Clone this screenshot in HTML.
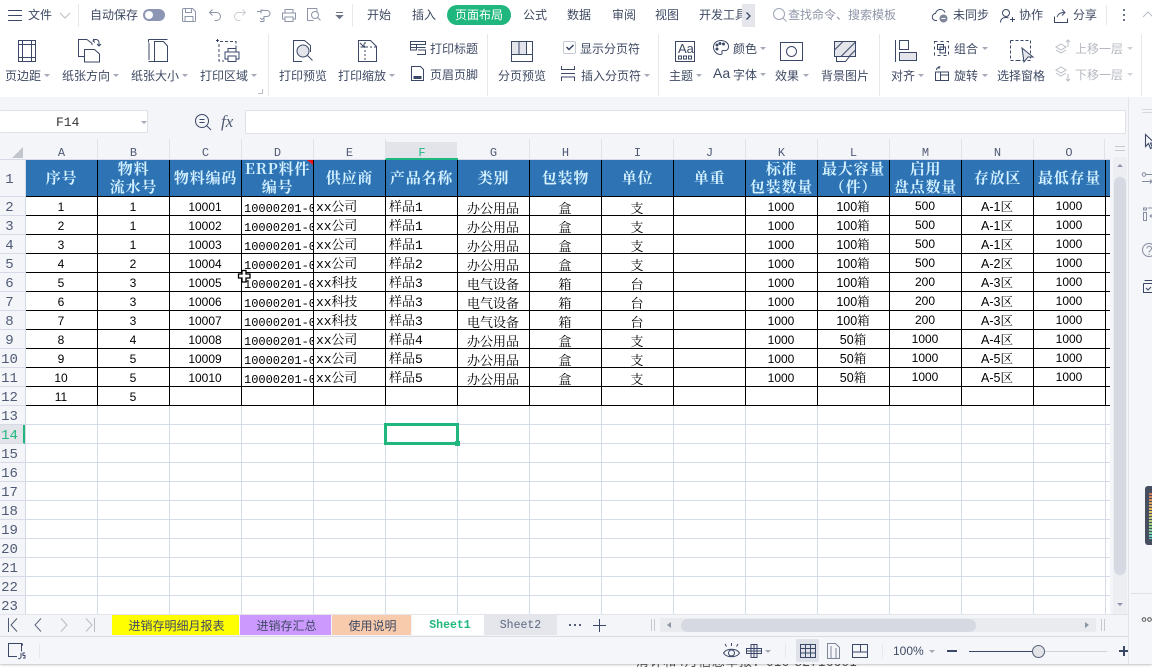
<!DOCTYPE html>
<html lang="zh"><head><meta charset="utf-8"><title>WPS</title>
<style>
html,body{margin:0;padding:0;width:1152px;height:668px;overflow:hidden;background:#fff}
body{position:relative;font-family:"Liberation Sans","Noto Sans CJK SC",sans-serif;font-size:12px;color:#3f4a63}
.a{position:absolute}
.t{position:absolute;white-space:nowrap;line-height:16px;font-size:12px;color:#3f4a63}
.c{position:absolute;width:0;height:0;border-left:3px solid transparent;border-right:3px solid transparent;border-top:3px solid #a3a9b6}
.d{position:absolute;width:1px;background:#e6e8ec}
svg{position:absolute;overflow:visible;fill:none;stroke:#3a4766;stroke-width:1}
.g svg,svg.g{stroke:#b9bdc6}
.m{color:#b4b8c0}
.ch{position:absolute;top:139px;height:20px;width:72px;text-align:center;font:12px/28px "Liberation Mono",monospace;color:#4f5a75;border-right:1px solid #dfe2e8;box-sizing:border-box}
.rn{position:absolute;left:0;width:25px;height:19px;padding-right:6px;text-align:center;font:14px/22px "Liberation Mono",monospace;color:#4f5a75;border-bottom:1px solid #d5dae6;box-sizing:border-box}
.h{position:absolute;top:160px;width:71px;height:36px;display:flex;align-items:center;justify-content:center;text-align:center;font:bold 15px/18px "Noto Serif CJK SC","Liberation Serif",serif;color:#d3f1ff;letter-spacing:.8px;z-index:3}
#grid{position:absolute;left:25px;top:198px;display:grid;grid-template-columns:repeat(15,72px);grid-auto-rows:19px;width:1080px;z-index:3;color:#000;font:12px/19px "Liberation Sans","Noto Serif CJK SC",serif}
#grid div{overflow:hidden;text-align:center;white-space:nowrap;box-sizing:border-box;height:18px}
#grid div:nth-child(15n+4){text-align:left;padding:2px 0 0 3px;font:12px/19px "Liberation Mono",monospace;height:19px;width:72px}
#grid div:nth-child(15n+5){text-align:left;padding:1px 0 0 3px;font:13px/18px "Liberation Mono","Noto Serif CJK SC",serif;letter-spacing:-.1px;height:19px}
#grid div:nth-child(15n+6){text-align:left;padding:1px 0 0 4px;font:13px/18px "Liberation Mono","Noto Serif CJK SC",serif;height:19px}
#grid div:nth-child(15n+7),#grid div:nth-child(15n+8),#grid div:nth-child(15n+9){font:13px/19px "Noto Serif CJK SC",serif;height:19px}
#grid div:nth-child(15n+12),#grid div:nth-child(15n+14){font-size:12.5px;font-family:"Liberation Sans","Noto Serif CJK SC",serif}
#grid div:nth-child(15n+13),#grid div:nth-child(15n+15){margin-top:-1px}
.tab{position:absolute;top:615px;height:20px;text-align:center;line-height:22px;font-size:12px}
</style></head><body>

<!-- top bar -->
<svg style="left:8px;top:10px" width="14" height="11"><path d="M0 .5h14M0 5.5h14M0 10.5h14"/></svg>
<div class="t" style="left:28px;top:7px">文件</div>
<svg class="g" style="left:60px;top:13px" width="10" height="6"><path d="M0 0l5 5 5-5"/></svg>
<div class="d" style="left:78px;top:4px;height:23px"></div>
<div class="t" style="left:90px;top:7px">自动保存</div>
<div class="a" style="left:143px;top:9px;width:22px;height:12px;border-radius:6px;background:#8c96b4"></div>
<div class="a" style="left:145px;top:11px;width:8px;height:8px;border-radius:4px;background:#fff"></div>
<svg style="left:182px;top:8px;stroke:#8d95a8" width="14" height="14"><path d="M.5 1.5a1 1 0 0 1 1-1h9l3 3v9a1 1 0 0 1-1 1h-11a1 1 0 0 1-1-1zM3.500 .5v4h6v-4M3 13.500v-5h8v5"/></svg>
<svg style="left:209px;top:9px;stroke:#8d95a8" width="13" height="12"><path d="M3.500 .5L.5 3.500l3 3M.5 3.500h7a4 4 0 0 1 0 8h-2"/></svg>
<svg class="g" style="left:233px;top:9px;stroke:#c9ccd3" width="13" height="12"><path d="M9.500 .5l3 3-3 3M12.500 3.500h-7a4 4 0 0 0 0 8h2"/></svg>
<svg style="left:257px;top:9px;stroke:#8d95a8" width="14" height="13"><path d="M0 2.500h4l2-2M4 .5v4M6 1.500h4a3 3 0 0 1 0 6H7v5M3 9l2 1.500L7 9M3 12.500h4"/></svg>
<svg style="left:282px;top:9px;stroke:#8d95a8" width="14" height="13"><path d="M3 4V.5h8V4M3 10H.5V4h13v6H11M3 8h8v4.500H3z"/></svg>
<svg style="left:307px;top:8px;stroke:#8d95a8" width="15" height="14"><path d="M10 .5H.5v12h6M10 .5V4"/><circle cx="8" cy="7" r="3.500"/><path d="M10.500 9.500l3 3"/></svg>
<svg style="left:335px;top:12px;stroke:#6d7588" width="9" height="8"><path d="M1 .5h7"/><path d="M1.500 3.500l3 3 3-3z" fill="#6d7588"/></svg>
<div class="d" style="left:352px;top:4px;height:23px"></div>
<div class="t" style="left:367px;top:7px">开始</div>
<div class="t" style="left:412px;top:7px">插入</div>
<div class="a" style="left:447px;top:5px;width:64px;height:20px;border-radius:10px;background:#1fb77d"></div>
<div class="t" style="left:455px;top:7px;color:#fff">页面布局</div>
<div class="t" style="left:523px;top:7px">公式</div>
<div class="t" style="left:567px;top:7px">数据</div>
<div class="t" style="left:612px;top:7px">审阅</div>
<div class="t" style="left:655px;top:7px">视图</div>
<div class="t" style="left:699px;top:7px;width:43px;overflow:hidden">开发工具</div>
<div class="a" style="left:742px;top:4px;width:13px;height:23px;background:#e4e6eb"></div>
<svg style="left:746px;top:12px;stroke-width:1.300" width="5" height="8"><path d="M.5 .5L4 4 .5 7.500"/></svg>
<svg style="left:773px;top:8px;stroke:#9ca3b3" width="14" height="14"><circle cx="6" cy="6" r="5.500"/><path d="M10 10l3.500 3.500"/></svg>
<div class="t" style="left:788px;top:7px;color:#8f96a8">查找命令、搜索模板</div>
<svg style="left:932px;top:8px" width="18" height="15"><path d="M5 12.500H4a3.500 3.500 0 0 1-.5-7A5 5 0 0 1 13 4.500"/><circle cx="11.500" cy="10.500" r="4" fill="#7d8598" stroke="none"/><path d="M9.500 10.500h4" stroke="#fff"/></svg>
<div class="t" style="left:953px;top:7px">未同步</div>
<svg style="left:1000px;top:9px" width="15" height="14"><circle cx="6" cy="4" r="3.500"/><path d="M.5 13.500c0-3 2-5 5.500-5 1 0 2 .2 2.500.5M10 10.500h5M12.500 8v5"/></svg>
<div class="t" style="left:1019px;top:7px">协作</div>
<svg style="left:1054px;top:9px" width="15" height="14"><path d="M.5 7.500v6h13v-4M3 8c1-3 3-4.500 7-4.500M8 .5l3 3-3 3"/></svg>
<div class="t" style="left:1073px;top:7px">分享</div>
<div class="d" style="left:1106px;top:5px;height:20px"></div>
<div class="a" style="left:1123px;top:9px;width:2px;height:2px;background:#6d7588;box-shadow:0 5px #6d7588,0 10px #6d7588"></div>
<svg class="g" style="left:1143px;top:12px" width="9" height="6"><path d="M0 5l5-5 5 5"/></svg>

<!-- ribbon -->
<svg style="left:18px;top:40px" width="18" height="22"><path d="M.5 .5h17v21H.5zM.5 4.500h17M.5 17.500h17M4.500 .5v21M13.500 .5v21"/></svg>
<div class="t" style="left:5px;top:68px">页边距</div><div class="c" style="left:44px;top:74px"></div>
<svg style="left:78px;top:39px" width="24" height="24"><path d="M9 .5H.5v17h6M9 .5l5 4v1.500M6.500 10.500h10l5 4.500v8h-15zM15 .5h3a3 3 0 0 1 3 3v3M19 5l2 2 2-2M17 .5l-2 1.500 2 1.500"/></svg>
<div class="t" style="left:62px;top:68px">纸张方向</div><div class="c" style="left:113px;top:74px"></div>
<svg style="left:148px;top:39px" width="20" height="23"><path d="M.5 .5h19M.5 22.500h6M1 4v17M6.500 2.500V22.500h13V7l-4-4.500z" /><path d="M.5 .5v3"/></svg>
<div class="t" style="left:131px;top:68px">纸张大小</div><div class="c" style="left:182px;top:74px"></div>
<svg style="left:216px;top:39px" width="24" height="24"><path d="M0 1.500h3M1.500 0v3M4 2.500h16v7M3 5v17h5" stroke-dasharray="3 2"/><path d="M12 13v-3.500h8V13M12 20H9v-7h14v7h-3M12 17h8v5.500h-8z"/></svg>
<div class="t" style="left:200px;top:68px">打印区域</div><div class="c" style="left:251px;top:74px"></div>
<svg class="g" style="left:258px;top:89px" width="5" height="5"><path d="M0 4.500h4.500V0"/></svg>
<div class="d" style="left:268px;top:34px;height:62px"></div>

<svg style="left:293px;top:40px" width="20" height="22"><path d="M9 21.500H.5V.5h11l6 5V12"/><circle cx="10" cy="11" r="6" fill="#e3e5ea"/><path d="M14.500 15.500l5 5"/></svg>
<div class="t" style="left:279px;top:68px">打印预览</div>
<svg style="left:358px;top:40px" width="19" height="22"><path d="M.5 .5h12l6 6v15H.5z"/><path d="M7 2v19M8 7h10" stroke-dasharray="2 2"/><path d="M2 3l4 4M6 3.500V7H2.500"/></svg>
<div class="t" style="left:338px;top:68px">打印缩放</div><div class="c" style="left:389px;top:74px"></div>
<svg style="left:410px;top:41px" width="16" height="14"><path d="M.5 .5h15v3H.5zM.5 3.500V9h6V3.500M.5 6.500h6M6.500 6.500h9M7 13.500h8.500V9H8" /></svg>
<div class="t" style="left:430px;top:41px">打印标题</div>
<svg style="left:411px;top:66px" width="13" height="15"><path d="M.5 .5h9l3 3v11H.5zM3 11.500h7"/><path d="M3 10.500h7v2H3z" fill="#3a4766"/></svg>
<div class="t" style="left:430px;top:67px">页眉页脚</div>
<div class="d" style="left:487px;top:34px;height:62px"></div>

<svg style="left:511px;top:41px" width="22" height="21"><path d="M.5 .5h21v20H.5z"/><path d="M.5 .5h15v13H.5z" fill="#e3e5ea"/><path d="M.5 13.500h21M8 .5v13M15.500 .5v13"/></svg>
<div class="t" style="left:498px;top:68px">分页预览</div>
<div class="a" style="left:563px;top:41px;width:11px;height:11px;border:1px solid #c5c9d2;border-radius:2px"></div>
<svg style="left:566px;top:44px;stroke-width:1.500" width="8" height="7"><path d="M.5 3l2.500 2.500L7.500 1"/></svg>
<div class="t" style="left:580px;top:41px">显示分页符</div>
<svg style="left:561px;top:66px" width="14" height="15"><path d="M.5 0v3.500h13V0M.5 15v-4h13v4M0 7.500h14" /></svg>
<div class="t" style="left:581px;top:68px">插入分页符</div><div class="c" style="left:644px;top:74px"></div>
<div class="d" style="left:658px;top:34px;height:62px"></div>

<svg style="left:675px;top:41px" width="20" height="21"><path d="M.5 .5h19v20H.5zM3.500 15h3v3h-3zM8.500 15h3v3h-3zM13.500 15h3v3h-3z"/></svg>
<div class="t" style="left:678px;top:41px;font-size:13px;line-height:16px">Aa</div>
<div class="t" style="left:669px;top:68px">主题</div><div class="c" style="left:696px;top:74px"></div>
<svg style="left:713px;top:40px" width="16" height="15"><path d="M8 .5c4 0 7.500 2.500 7.500 6S13 11 11 10.500c-2-.5-2.500 1-2 2s0 2-1.500 2C3.500 14.500.5 11 .5 7S4 .5 8 .5z"/><circle cx="4" cy="5" r="1" fill="#3a4766"/><circle cx="7" cy="3.500" r="1" fill="#3a4766"/><circle cx="10.500" cy="4" r="1" fill="#3a4766"/><circle cx="4" cy="9" r="1" fill="#3a4766"/></svg>
<div class="t" style="left:733px;top:41px">颜色</div><div class="c" style="left:760px;top:47px"></div>
<div class="t" style="left:713px;top:65px;font-size:14px">Aa</div>
<div class="t" style="left:733px;top:67px">字体</div><div class="c" style="left:760px;top:73px"></div>
<svg style="left:780px;top:42px" width="23" height="19"><path d="M.5 .5h22v18H.5z"/><circle cx="11.500" cy="9.500" r="5"/></svg>
<div class="t" style="left:775px;top:68px">效果</div><div class="c" style="left:803px;top:74px"></div>
<svg style="left:834px;top:41px" width="22" height="22"><path d="M.5 .5h21v15h-21z" fill="#e3e5ea"/><path d="M.5 9L9 .5M7 15.500L22 .5M15 15.500L21.500 9M.5 15.500h2v5h9l4-5"/></svg>
<div class="t" style="left:821px;top:68px">背景图片</div>
<div class="d" style="left:879px;top:34px;height:62px"></div>

<svg style="left:895px;top:40px" width="22" height="22"><path d="M.5 0v22M4.500 .5h9v9h-9z"/><path d="M4.500 12.500h17v8h-17z" fill="#e3e5ea"/></svg>
<div class="t" style="left:891px;top:68px">对齐</div><div class="c" style="left:918px;top:74px"></div>
<svg style="left:934px;top:41px" width="15" height="15"><path d="M.5 .5h14v14H.5z" stroke-dasharray="3 3"/><path d="M3.500 3.500h6v5h-6zM6 6h5.500v6H6z"/></svg>
<div class="t" style="left:954px;top:41px">组合</div><div class="c" style="left:982px;top:47px"></div>
<svg style="left:935px;top:66px" width="14" height="15"><path d="M.5 14.500V6h5v8.500zM5.500 14.500V9h8v5.500h-13M5.500 6h8V14M1.500 4c0-2 1.500-3 4-3M4 0v3"/></svg>
<div class="t" style="left:954px;top:68px">旋转</div><div class="c" style="left:982px;top:74px"></div>
<svg style="left:1010px;top:40px" width="24" height="23"><path d="M.5 .5h20v20H8" stroke-dasharray="3 2"/><path d="M.5 .5v20H8" stroke-dasharray="3 2"/><path d="M12 8l11 9h-5l-4 5z" fill="#e3e5ea"/></svg>
<div class="t" style="left:997px;top:68px">选择窗格</div>
<svg class="g" style="left:1055px;top:40px" width="16" height="16"><path d="M6 4l-5 3 5 3 5-3zM1 10l5 3 5-3M13 0v7M11 2l2-2 2 2"/></svg>
<div class="t m" style="left:1075px;top:41px">上移一层</div><div class="c" style="left:1127px;top:47px;border-top-color:#cfd2d8"></div>
<svg class="g" style="left:1055px;top:66px" width="16" height="16"><path d="M6 1L1 4l5 3 5-3zM1 7l5 3 5-3M13 8v7M11 13l2 2 2-2"/></svg>
<div class="t m" style="left:1075px;top:67px">下移一层</div><div class="c" style="left:1127px;top:73px;border-top-color:#cfd2d8"></div>
<div class="d" style="left:1141px;top:34px;height:62px"></div>

<!-- formula bar area -->
<div class="a" style="left:0;top:97px;width:1152px;height:42px;background:#f4f5f8"></div>
<div class="a" style="left:0;top:110px;width:148px;height:23px;background:#fff;border:1px solid #dfe1e7;border-left:0;border-radius:2px;box-sizing:border-box"></div>
<div class="t" style="left:56px;top:115px;font:13px/16px 'Liberation Mono',monospace;color:#333">F14</div>
<div class="c" style="left:141px;top:121px"></div>
<svg style="left:195px;top:114px" width="17" height="16"><circle cx="7" cy="7" r="6.500"/><path d="M12 12l4 4M4.500 5.500h5M4.500 8.500h5"/></svg>
<div class="t" style="left:221px;top:113px;font:italic 17px/18px 'Liberation Serif',serif;color:#4f5a75">fx</div>
<div class="a" style="left:245px;top:110px;width:881px;height:24px;background:#fff;border:1px solid #dfe1e7;border-radius:2px;box-sizing:border-box"></div>

<!-- column headers -->
<div class="a" style="left:0;top:139px;width:1128px;height:21px;background:#f4f5f8;border-bottom:1px solid #d5dae6;box-sizing:border-box"></div>
<svg style="left:12px;top:147px;stroke:none;fill:#c2c5cc" width="11" height="11"><path d="M11 0v11H0z"/></svg>
<div class="a" style="left:385px;top:142px;width:72px;height:17px;background:#e2e4ea"></div>
<div class="a" style="left:385px;top:158px;width:73px;height:2px;background:#1fb77d"></div>
<div class="ch" style="left:26px">A</div><div class="ch" style="left:98px">B</div><div class="ch" style="left:170px">C</div><div class="ch" style="left:242px">D</div><div class="ch" style="left:314px">E</div><div class="ch" style="left:386px;color:#1fb77d;border:0">F</div><div class="ch" style="left:458px">G</div><div class="ch" style="left:530px">H</div><div class="ch" style="left:602px">I</div><div class="ch" style="left:674px">J</div><div class="ch" style="left:746px">K</div><div class="ch" style="left:818px">L</div><div class="ch" style="left:890px">M</div><div class="ch" style="left:962px">N</div><div class="ch" style="left:1034px;width:71px">O</div>

<!-- row headers -->
<div class="a" style="left:0;top:160px;width:25px;height:454px;background:#f4f5f8;border-right:1px solid #d5dae6;box-sizing:content-box"></div>
<div class="rn" style="top:160px;height:37px;line-height:41px">1</div>
<div class="rn" style="top:197px">2</div><div class="rn" style="top:216px">3</div><div class="rn" style="top:235px">4</div><div class="rn" style="top:254px">5</div><div class="rn" style="top:273px">6</div><div class="rn" style="top:292px">7</div><div class="rn" style="top:311px">8</div><div class="rn" style="top:330px">9</div><div class="rn" style="top:349px">10</div><div class="rn" style="top:368px">11</div><div class="rn" style="top:387px">12</div><div class="rn" style="top:406px">13</div>
<div class="rn" style="top:425px;color:#1fb77d;background:#e2e4ea;border-right:2px solid #1fb77d;padding-right:4px">14</div>
<div class="rn" style="top:444px">15</div><div class="rn" style="top:463px">16</div><div class="rn" style="top:482px">17</div><div class="rn" style="top:501px">18</div><div class="rn" style="top:520px">19</div><div class="rn" style="top:539px">20</div><div class="rn" style="top:558px">21</div><div class="rn" style="top:577px">22</div><div class="rn" style="top:596px">23</div>

<!-- sheet -->
<div class="a" style="left:26px;top:160px;width:1084px;height:36px;background:#2e74b5"></div>
<div class="a" style="left:26px;top:405px;width:1084px;height:209px;background-image:linear-gradient(to right,transparent 71px,#d5dce9 71px),linear-gradient(to bottom,transparent 18px,#d5dce9 18px);background-size:72px 19px;background-position:0 1px"></div>
<div class="a" style="left:26px;top:160px;width:1084px;height:246px;background-image:linear-gradient(to right,transparent 71px,#000 71px);background-size:72px 100%;z-index:2"></div>
<div class="a" style="left:26px;top:196px;width:1084px;height:210px;background-image:linear-gradient(to bottom,#000 1px,transparent 1px);background-size:100% 19px;z-index:2"></div>
<svg style="left:307px;top:160px;stroke:none;fill:#e8141c;z-index:4" width="6" height="5"><path d="M0 0h6v5z"/></svg>

<div class="h" style="left:26px">序号</div>
<div class="h" style="left:98px">物料<br>流水号</div>
<div class="h" style="left:170px">物料编码</div>
<div class="h" style="left:242px">ERP料件<br>编号</div>
<div class="h" style="left:314px">供应商</div>
<div class="h" style="left:386px">产品名称</div>
<div class="h" style="left:458px">类别</div>
<div class="h" style="left:530px">包装物</div>
<div class="h" style="left:602px">单位</div>
<div class="h" style="left:674px">单重</div>
<div class="h" style="left:746px">标准<br>包装数量</div>
<div class="h" style="left:818px">最大容量<br>（件）</div>
<div class="h" style="left:890px">启用<br>盘点数量</div>
<div class="h" style="left:962px">存放区</div>
<div class="h" style="left:1034px">最低存量</div>

<div id="grid">
<div>1</div><div>1</div><div>10001</div><div>10000201-01</div><div>xx公司</div><div>样品1</div><div>办公用品</div><div>盒</div><div>支</div><div></div><div>1000</div><div>100箱</div><div>500</div><div>A-1区</div><div>1000</div>
<div>2</div><div>1</div><div>10002</div><div>10000201-02</div><div>xx公司</div><div>样品1</div><div>办公用品</div><div>盒</div><div>支</div><div></div><div>1000</div><div>100箱</div><div>500</div><div>A-1区</div><div>1000</div>
<div>3</div><div>1</div><div>10003</div><div>10000201-03</div><div>xx公司</div><div>样品1</div><div>办公用品</div><div>盒</div><div>支</div><div></div><div>1000</div><div>100箱</div><div>500</div><div>A-1区</div><div>1000</div>
<div>4</div><div>2</div><div>10004</div><div>10000201-04</div><div>xx公司</div><div>样品2</div><div>办公用品</div><div>盒</div><div>支</div><div></div><div>1000</div><div>100箱</div><div>500</div><div>A-2区</div><div>1000</div>
<div>5</div><div>3</div><div>10005</div><div>10000201-05</div><div>xx科技</div><div>样品3</div><div>电气设备</div><div>箱</div><div>台</div><div></div><div>1000</div><div>100箱</div><div>200</div><div>A-3区</div><div>1000</div>
<div>6</div><div>3</div><div>10006</div><div>10000201-06</div><div>xx科技</div><div>样品3</div><div>电气设备</div><div>箱</div><div>台</div><div></div><div>1000</div><div>100箱</div><div>200</div><div>A-3区</div><div>1000</div>
<div>7</div><div>3</div><div>10007</div><div>10000201-07</div><div>xx科技</div><div>样品3</div><div>电气设备</div><div>箱</div><div>台</div><div></div><div>1000</div><div>100箱</div><div>200</div><div>A-3区</div><div>1000</div>
<div>8</div><div>4</div><div>10008</div><div>10000201-08</div><div>xx公司</div><div>样品4</div><div>办公用品</div><div>盒</div><div>支</div><div></div><div>1000</div><div>50箱</div><div>1000</div><div>A-4区</div><div>1000</div>
<div>9</div><div>5</div><div>10009</div><div>10000201-09</div><div>xx公司</div><div>样品5</div><div>办公用品</div><div>盒</div><div>支</div><div></div><div>1000</div><div>50箱</div><div>1000</div><div>A-5区</div><div>1000</div>
<div>10</div><div>5</div><div>10010</div><div>10000201-01</div><div>xx公司</div><div>样品5</div><div>办公用品</div><div>盒</div><div>支</div><div></div><div>1000</div><div>50箱</div><div>1000</div><div>A-5区</div><div>1000</div>
<div>11</div><div>5</div><div></div><div></div><div></div><div></div><div></div><div></div><div></div><div></div><div></div><div></div><div></div><div></div><div></div>
</div>

<!-- selected cell -->
<div class="a" style="left:384px;top:423px;width:75px;height:22px;border:3px solid #1fb77d;box-sizing:border-box;z-index:4"></div>
<div class="a" style="left:455px;top:441px;width:5px;height:5px;background:#1fb77d;z-index:5"></div>
<!-- cursor -->
<svg style="left:238px;top:270px;z-index:6;stroke:#000;stroke-width:1.300;fill:#fff" width="13" height="13"><path d="M4 .5h4v3.500h4v4H8v4H4V8H.5V4H4z"/></svg>

<!-- vertical scrollbar -->
<div class="a" style="left:1110px;top:139px;width:18px;height:475px;background:#f4f5f8;z-index:5"></div>
<div class="a" style="left:1113px;top:157px;width:14px;height:457px;background:#edeef2;z-index:5"></div>
<div class="a" style="left:1114px;top:177px;width:12px;height:398px;border-radius:6px;background:#d6d9e2;z-index:6"></div>
<svg style="left:1115px;top:146px;stroke:#c5c9d2;z-index:6" width="10" height="5"><path d="M0 .5h10M0 4.500h10"/></svg>
<div class="c" style="left:1117px;top:164px;border-top:0;border-bottom:3px solid #8e95a8;z-index:6"></div>
<div class="c" style="left:1117px;top:603px;border-top-color:#8e95a8;z-index:6"></div>

<!-- right panel -->
<div class="a" style="left:1128px;top:97px;width:24px;height:567px;background:#f5f6f9;border-left:1px solid #e2e4e9;box-sizing:border-box;z-index:5"></div>
<svg style="left:1142px;top:109px;stroke:#d5d8df;z-index:6" width="10" height="4"><path d="M0 .5h10M0 3.500h10"/></svg>
<svg style="left:1145px;top:134px;z-index:6;stroke-width:1.100" width="9" height="15"><path d="M.5 .5v12l3-3 2 5 2-1-2-4.500h4z"/></svg>
<svg style="left:1142px;top:172px;z-index:6;stroke:#858da0" width="12" height="12"><circle cx="2" cy="2.500" r="1.800"/><path d="M4 2.500h8M0 9.500h10M8 7.500l2 2-2 2"/></svg>
<svg style="left:1143px;top:207px;z-index:6;stroke:#858da0" width="10" height="14"><path d="M.5 1h3v2h-3zM.5 5.500h3v8h-3zM5 1h6M7 9h5M8.500 7.500L7 9l1.500 1.500"/></svg>
<svg style="left:1142px;top:243px;z-index:6;stroke:#858da0" width="12" height="15"><circle cx="7" cy="7" r="6.500"/><path d="M5 5.500c0-3 4.500-3 4.500 0 0 2-2.500 2-2.500 4M7 11v1"/></svg>
<svg style="left:1143px;top:280px;z-index:6" width="10" height="13"><path d="M1.500 .5h9M.5 3.500h10M.5 3.500v9h10M3 8l2 2 3-3"/></svg>
<div class="a" style="left:1145px;top:486px;width:7px;height:59px;background:#464e60;border-radius:3px 0 0 3px;z-index:6"></div>
<div class="a" style="left:1149px;top:493px;width:3px;height:46px;background:linear-gradient(#c9795a,#e0c26b 40%,#9fd18a 70%,#63d0c0);z-index:7"></div>
<div class="a" style="left:1149px;top:493px;width:3px;height:46px;background:repeating-linear-gradient(to bottom,transparent 0 2px,#464e60 2px 3px);z-index:8"></div>
<div class="a" style="left:1131px;top:593px;width:21px;height:1px;background:#dfe1e7;z-index:6"></div>
<svg style="left:1142px;top:617px;stroke:#555;z-index:6" width="10" height="5"><circle cx="2" cy="2.500" r="1.800"/><circle cx="7.500" cy="2.500" r="1.800"/></svg>

<!-- tab bar -->
<div class="a" style="left:0;top:614px;width:1128px;height:23px;background:#f4f5f8;border-top:1px solid #e3e5ea;box-sizing:border-box"></div>
<div class="a" style="left:0;top:636px;width:1152px;height:1px;background:#e0e2e7"></div>
<svg style="left:8px;top:618px;stroke:#4f5a75" width="10" height="14"><path d="M.5 0v14M9 .5L3 7l6 6.500"/></svg>
<svg style="left:34px;top:618px;stroke:#5d6780" width="8" height="14"><path d="M7 .5L1 7l6 6.500"/></svg>
<svg style="left:60px;top:618px;stroke:#b7bbc5" width="8" height="14"><path d="M1 .5L7 7l-6 6.500"/></svg>
<svg style="left:85px;top:618px;stroke:#b7bbc5" width="10" height="14"><path d="M9.500 0v14M1 .5L7 7l-6 6.500"/></svg>
<div class="tab" style="left:112px;width:127px;background:#ff0;padding-left:2px;box-sizing:border-box">进销存明细月报表</div>
<div class="tab" style="left:240px;width:91px;background:#cc99ff;padding-left:2px;box-sizing:border-box">进销存汇总</div>
<div class="tab" style="left:332px;width:79px;background:#f8cbad;padding-left:2px;box-sizing:border-box">使用说明</div>
<div class="tab" style="left:412px;width:72px;background:#fff;color:#1fb77d;font:bold 11.500px/22px 'Liberation Mono',monospace;padding-left:4px;box-sizing:border-box">Sheet1</div>
<div class="tab" style="left:484px;width:73px;background:#e4e6eb;font:11.500px/22px 'Liberation Mono',monospace;color:#5d6780">Sheet2</div>
<div class="a" style="left:569px;top:624px;width:2px;height:2px;background:#555f78;box-shadow:5px 0 #555f78,10px 0 #555f78"></div>
<svg style="left:593px;top:619px;stroke:#3a4766" width="13" height="13"><path d="M0 6.500h13M6.500 0v13"/></svg>
<svg style="left:651px;top:619px;stroke:#c4c8d1" width="4" height="12"><path d="M.5 0v12M3.500 0v12"/></svg>
<div class="a" style="left:660px;top:618px;width:436px;height:14px;background:#e9ebef"></div>
<div class="a" style="left:681px;top:619px;width:295px;height:13px;border-radius:7px;background:#d6d9e2"></div>
<svg style="left:667px;top:622px;stroke:none;fill:#8e95a8" width="4" height="6"><path d="M4 0v6L0 3z"/></svg>
<svg style="left:1085px;top:622px;stroke:none;fill:#8e95a8" width="4" height="6"><path d="M0 0v6l4-3z"/></svg>
<svg style="left:1101px;top:619px;stroke:#c4c8d1" width="4" height="12"><path d="M.5 0v12M3.500 0v12"/></svg>

<!-- status bar -->
<div class="a" style="left:0;top:637px;width:1152px;height:27px;background:#f5f6f9;box-shadow:0 1px 2px rgba(0,0,0,.25);z-index:2"></div>
<div class="a" style="left:0;top:664px;width:1152px;height:4px;background:#fff;overflow:hidden"><div class="t" style="left:636px;top:-10px;font-size:13px;letter-spacing:.6px;color:#555">清计和4月信息举报：010-82716601</div></div>
<div style="position:absolute;left:0;top:0;z-index:3">
<svg style="left:8px;top:643px" width="17" height="17"><path d="M9 13.500H.5V.5h13v8M14.500 .5v2M13 10v4a2 2 0 0 1-3 1.500M17 10h-2v2.500h2v2.500h-2"/></svg>
<div class="d" style="left:39px;top:644px;height:14px"></div>
<svg style="left:723px;top:643px" width="17" height="16"><path d="M.5 10c3-5 13-5 16 0-3 5-13 5-16 0z"/><circle cx="8.500" cy="10" r="3"/><path d="M8.500 0v3M2 1l1.500 2.500M15 1l-1.500 2.500"/></svg>
<svg style="left:746px;top:644px" width="16" height="14"><path d="M5 .5h6v4h4.500v5H11v4H5v-4H.5v-5H5zM5 4.500h6v5H5zM8 .5v13M.5 7h15"/></svg>
<div class="c" style="left:765px;top:650px"></div>
<div class="d" style="left:785px;top:644px;height:14px"></div>
<div class="a" style="left:796px;top:639px;width:23px;height:23px;background:#dfe2e9;border-radius:2px"></div>
<svg style="left:800px;top:644px" width="16" height="14"><path d="M.5 .5h15v13H.5zM.5 4.500h15M.5 9h15M5.500 .5v13M10.500 .5v13"/></svg>
<svg style="left:827px;top:643px;stroke:#7d8598" width="13" height="16"><path d="M.5 .5h8l4 4v11H.5zM4 3v12M9 5v10"/></svg>
<svg style="left:852px;top:644px" width="16" height="14"><path d="M.5 .5h15v13H.5zM.5 8h8V.5"/><path d="M8.500 8h7"/></svg>
<div class="d" style="left:882px;top:644px;height:14px"></div>
<div class="t" style="left:893px;top:643px">100%</div>
<div class="c" style="left:929px;top:650px"></div>
<div class="a" style="left:947px;top:650px;width:10px;height:2px;background:#3a4766"></div>
<div class="a" style="left:969px;top:651px;width:69px;height:1px;background:#3a4766"></div>
<div class="a" style="left:1038px;top:651px;width:69px;height:1px;background:#cfd2d9"></div>
<div class="a" style="left:1032px;top:645px;width:11px;height:11px;border-radius:50%;background:#e3e4e8;border:1px solid #555f78"></div>
<svg style="left:1119px;top:646px;stroke-width:2" width="10" height="10"><path d="M0 5h10M5 0v10"/></svg>
<svg style="left:1142px;top:644px" width="10" height="14"><path d="M0 4V0h4M0 0l4 4M0 10v4h4M0 14l4-4"/></svg>
</div>
</body></html>
